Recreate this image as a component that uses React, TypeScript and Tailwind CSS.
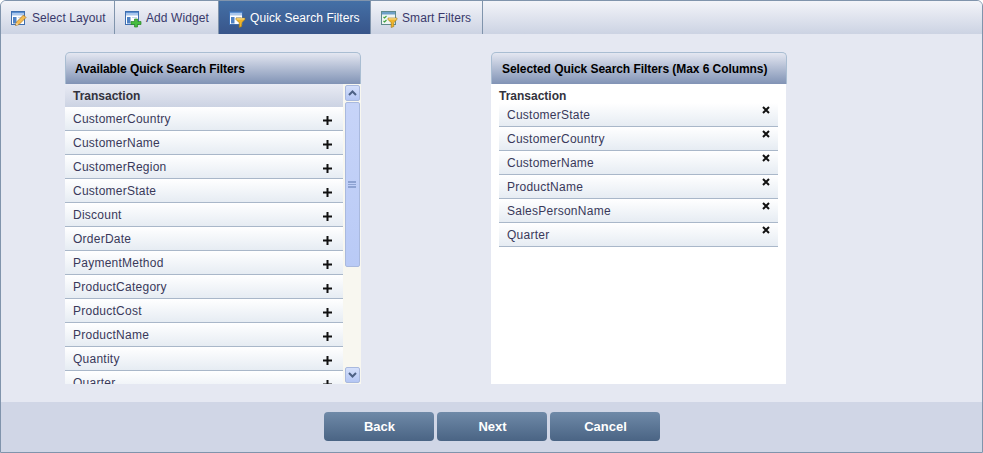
import React from "react";

const font = "[font-family:'Liberation_Sans',Arial,sans-serif]";

const available = [
  "CustomerCountry",
  "CustomerName",
  "CustomerRegion",
  "CustomerState",
  "Discount",
  "OrderDate",
  "PaymentMethod",
  "ProductCategory",
  "ProductCost",
  "ProductName",
  "Quantity",
  "Quarter",
];

const selected = [
  "CustomerState",
  "CustomerCountry",
  "CustomerName",
  "ProductName",
  "SalesPersonName",
  "Quarter",
];

// small window glyph shared by the tab icons
const WindowIcon = () => (
  <>
    <rect x="0.5" y="2.5" width="13" height="13" fill="#fff" stroke="#3f6fb0" />
    <rect x="1" y="3" width="12" height="3.500" fill="#a9c6ec" />
    <rect x="1" y="3" width="12" height="1" fill="#5b8fd0" />
    <rect x="2" y="8" width="3.500" height="6.500" fill="#4f82c4" />
    <rect x="7" y="8" width="5" height="1" fill="#c5d6ee" />
  </>
);

const Funnel = () => (
  <g>
    <path d="M7 9h9v1.500l-3.200 3.200V17.500l-2.600 1v-4.800L7 10.500z" fill="#f0b429" stroke="#9a7414" strokeWidth="0.600" />
    <rect x="7.500" y="9.400" width="8" height="1" fill="#fbe6a2" />
  </g>
);

const LayoutIcon = () => (
  <svg width="16" height="18" viewBox="0 0 16 18" className="overflow-visible">
    <WindowIcon />
    <path d="M4.500 16.500l1-3.500 7-7 2.500 2.500-7 7z" fill="#f4bb52" stroke="#a8741b" strokeWidth="0.700" />
    <path d="M5 16l.6-2.200 1.700 1.600z" fill="#f7e2bd" />
  </svg>
);

const WidgetIcon = () => (
  <svg width="16" height="18" viewBox="0 0 16 18" className="overflow-visible">
    <WindowIcon />
    <path d="M9.500 10h3v2.500H16v3h-3.500V18h-3v-2.500H6v-3h3.500z" fill="#46bd3e" stroke="#2b8427" strokeWidth="0.700" />
  </svg>
);

const QuickIcon = () => (
  <svg width="16" height="18" viewBox="0 0 16 18" className="overflow-visible">
    <WindowIcon />
    <Funnel />
  </svg>
);

const SmartIcon = () => (
  <svg width="16" height="18" viewBox="0 0 16 18" className="overflow-visible">
    <rect x="0.500" y="2.500" width="14" height="13" fill="#eef4f2" stroke="#5f8a8c" />
    <rect x="1" y="3" width="13" height="2.500" fill="#6ea0c8" />
    <path d="M2.500 8l1 1 2-2M2.500 12l1 1 2-2" fill="none" stroke="#3fa33c" strokeWidth="1.100" />
    <Funnel />
  </svg>
);

const PlusIcon = () => (
  <svg width="9" height="9" viewBox="0 0 9 9">
    <path d="M3.500 0h2v3.500H9v2H5.500V9h-2V5.500H0v-2h3.500z" fill="#111" />
  </svg>
);

const CrossIcon = () => (
  <svg width="8" height="8" viewBox="0 0 8 8">
    <path d="M1 1l6 6M7 1l-6 6" stroke="#111" strokeWidth="2" />
  </svg>
);

const ScrollButton = ({ down }: { down?: boolean }) => (
  <div className="flex h-[16px] w-[15px] shrink-0 items-center justify-center rounded-[2px] border border-[#a9b9de] bg-gradient-to-b from-[#d5e0fb] to-[#b4c6f4]">
    <svg width="9" height="6" viewBox="0 0 9 6">
      <path d={down ? "M1 1l3.500 3.500L8 1" : "M1 5l3.500-3.500L8 5"} fill="none" stroke="#4d6185" strokeWidth="2" />
    </svg>
  </div>
);

const tabs = [
  { label: "Select Layout", icon: <LayoutIcon />, width: "w-[114px]" },
  { label: "Add Widget", icon: <WidgetIcon />, width: "w-[104px]" },
  { label: "Quick Search Filters", icon: <QuickIcon />, width: "w-[152px]", active: true },
  { label: "Smart Filters", icon: <SmartIcon />, width: "w-[112px]" },
];

const PanelHeader = ({ title, className }: { title: string; className: string }) => (
  <div
    className={`flex h-[32px] items-center rounded-t-[5px] border-x border-t border-[#a9bdd2] bg-gradient-to-b from-[#e4e7f1] to-[#8193b5] text-[12px] font-bold tracking-[-0.06px] text-black ${className}`}
  >
    {title}
  </div>
);

const Row = ({ label, children, className }: { label: string; children: React.ReactNode; className: string }) => (
  <div
    className={`flex h-[24px] shrink-0 justify-between border-b border-[#a9b7c9] bg-gradient-to-b from-white to-[#e6ecf3] text-[12px] tracking-[0.25px] text-[#39395a] ${className}`}
  >
    <span className="pt-[3px]">{label}</span>
    {children}
  </div>
);

const App = () => (
  <div className={`flex h-[453px] w-[983px] flex-col overflow-hidden rounded-t-[6px] border border-[#8094ac] bg-[#e5e8f2] ${font}`}>
    <div className="flex h-[33px] shrink-0 bg-gradient-to-b from-[#f3f4f9] to-[#ccd3e3]">
      {tabs.map((t) => (
        <div
          key={t.label}
          className={`flex items-center gap-[5px] border-r border-[#8094ac] pl-[10px] text-[12px] tracking-[0.08px] ${t.width} ${
            t.active ? "bg-gradient-to-b from-[#4470a6] to-[#38558a] text-white" : "text-[#39396b]"
          }`}
        >
          {t.icon}
          <span>{t.label}</span>
        </div>
      ))}
    </div>

    <div className="flex h-[368px] shrink-0 gap-[130px] pl-[64px] pt-[18px]">
      <div className="flex w-[296px] flex-col">
        <PanelHeader title="Available Quick Search Filters" className="pl-[9px]" />
        <div className="flex h-[300px] overflow-hidden bg-white">
          <div className="flex w-[278px] flex-col overflow-hidden">
            <div className="flex h-[23px] shrink-0 items-center bg-gradient-to-b from-[#e9ebf4] to-[#ccd3e3] pl-[8px] text-[12px] font-bold text-[#33333d]">
              Transaction
            </div>
            {available.map((name) => (
              <Row key={name} label={name} className="pl-[8px] pr-[11px]">
                <span className="pt-[9px]">
                  <PlusIcon />
                </span>
              </Row>
            ))}
          </div>
          <div className="flex w-[18px] flex-col items-center gap-px bg-[#f8f7f0] py-px">
            <ScrollButton />
            <div className="flex h-[165px] w-[15px] shrink-0 items-center justify-center rounded-[2px] border border-[#a9b9de] bg-gradient-to-b from-[#c7d4f8] to-[#b9caf6]">
              <div className="h-[7px] w-[8px] border-y border-[#8ea3d2] bg-[repeating-linear-gradient(180deg,#8ea3d2_0,#8ea3d2_1px,transparent_1px,transparent_2px)]" />
            </div>
            <div className="flex-1" />
            <ScrollButton down />
          </div>
        </div>
      </div>

      <div className="flex w-[296px] flex-col">
        <PanelHeader title="Selected Quick Search Filters (Max 6 Columns)" className="pl-[10px]" />
        <div className="mr-px flex h-[300px] flex-col bg-white px-[8px]">
          <div className="h-[19px] shrink-0 pt-[5px] text-[12px] font-bold leading-[14px] text-[#33333d]">Transaction</div>
          {selected.map((name) => (
            <Row key={name} label={name} className="pl-[8px] pr-[8px]">
              <span className="pt-[3px]">
                <CrossIcon />
              </span>
            </Row>
          ))}
        </div>
      </div>
    </div>

    <div className="flex flex-1 justify-center gap-[3px] bg-[#d0d6e6] pt-[10px]">
      {["Back", "Next", "Cancel"].map((b) => (
        <button
          key={b}
          className="h-[29px] w-[110px] rounded-[4px] bg-gradient-to-b from-[#6f8aa8] to-[#4a6484] pl-[2px] text-[13px] font-bold text-white"
        >
          {b}
        </button>
      ))}
    </div>
  </div>
);

export default App;
